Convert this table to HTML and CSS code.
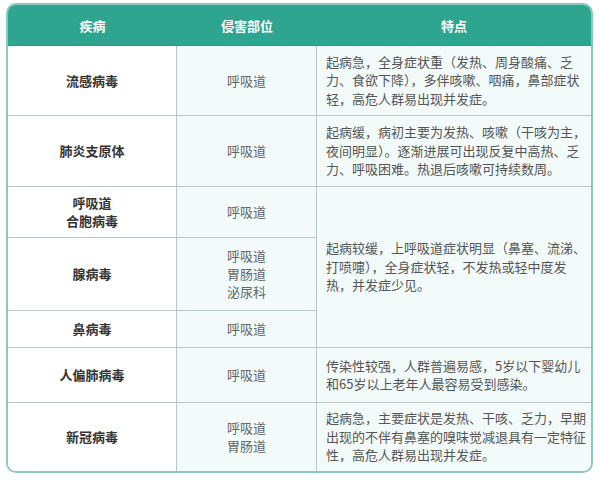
FILE: index.html
```html
<!DOCTYPE html>
<html lang="zh">
<head>
<meta charset="utf-8">
<link rel="stylesheet" href="styles.css">
</head>
<body>
<div class="card">
  <table class="grid">
    <colgroup>
      <col class="c1"><col class="c2"><col class="c3">
    </colgroup>
    <thead>
      <tr class="h">
        <th>疾病</th><th>侵害部位</th><th class="last">特点</th>
      </tr>
    </thead>
    <tbody>
      <tr class="r1">
        <td class="name">流感病毒</td>
        <td class="site">呼吸道</td>
        <td class="desc">起病急，全身症状重（发热、周身酸痛、乏<br>力、食欲下降），多伴咳嗽、咽痛，鼻部症状<br>轻，高危人群易出现并发症。</td>
      </tr>
      <tr class="r2">
        <td class="name">肺炎支原体</td>
        <td class="site">呼吸道</td>
        <td class="desc">起病缓，病初主要为发热、咳嗽（干咳为主，<br>夜间明显）。逐渐进展可出现反复中高热、乏<br>力、呼吸困难。热退后咳嗽可持续数周。</td>
      </tr>
      <tr class="r3">
        <td class="name">呼吸道<br>合胞病毒</td>
        <td class="site">呼吸道</td>
        <td class="desc" rowspan="3">起病较缓，上呼吸道症状明显（鼻塞、流涕、<br>打喷嚏），全身症状轻，不发热或轻中度发<br>热，并发症少见。</td>
      </tr>
      <tr class="r4">
        <td class="name">腺病毒</td>
        <td class="site">呼吸道<br>胃肠道<br>泌尿科</td>
      </tr>
      <tr class="r5">
        <td class="name">鼻病毒</td>
        <td class="site">呼吸道</td>
      </tr>
      <tr class="r6">
        <td class="name">人偏肺病毒</td>
        <td class="site">呼吸道</td>
        <td class="desc">传染性较强，人群普遍易感，5岁以下婴幼儿<br>和65岁以上老年人最容易受到感染。</td>
      </tr>
      <tr class="r7 end">
        <td class="name">新冠病毒</td>
        <td class="site">呼吸道<br>胃肠道</td>
        <td class="desc">起病急，主要症状是发热、干咳、乏力，早期<br>出现的不伴有鼻塞的嗅味觉减退具有一定特征<br>性，高危人群易出现并发症。</td>
      </tr>
    </tbody>
  </table>
</div>
</body>
</html>
```

FILE: styles.css
```css
html, body {
  margin: 0;
  padding: 0;
  background: #ffffff;
}
body {
  font-family: "Noto Sans CJK SC", "Noto Sans", sans-serif;
  width: 600px;
  height: 480px;
  overflow: hidden;
}
.card {
  margin: 3px 0 0 6px;
  width: 583px;
  border: 2px solid #8ec8bd;
  border-radius: 10px;
  overflow: hidden;
  background: #ffffff;
}
.grid {
  width: 100%;
  border-collapse: separate;
  border-spacing: 0;
  table-layout: fixed;
}
.c1 { width: 169px; }
.c2 { width: 140px; }
.c3 { width: auto; }

.h th {
  height: 40px;
  padding: 0;
  background: #2ea58e;
  color: #ffffff;
  font-size: 13px;
  font-weight: 700;
  text-align: center;
  vertical-align: middle;
  border-bottom: 1px solid #2a9883;
}
td {
  padding: 0;
  vertical-align: middle;
  border-right: 1px solid #b9c9c6;
  border-bottom: 1px solid #b9c9c6;
  font-size: 13px;
}
td.desc { border-right: none; }
.end td { border-bottom: none; }
.name {
  text-align: center;
  font-weight: 700;
  color: #333333;
  background: #ffffff;
  line-height: 18px;
}
.site {
  text-align: center;
  color: #666666;
  background: #f2fbfa;
  line-height: 18px;
}
.desc {
  color: #555555;
  background: #f2fbfa;
  padding: 0 4px 0 9px;
  line-height: 18.5px;
  letter-spacing: 0;
  white-space: nowrap;
}
.r1 { height: 70px; }
.r2 { height: 71px; }
.r3 { height: 51px; }
.r4 { height: 73px; }
.r5 { height: 37px; }
.r6 { height: 55px; }
.r7 { height: 68px; }
```
